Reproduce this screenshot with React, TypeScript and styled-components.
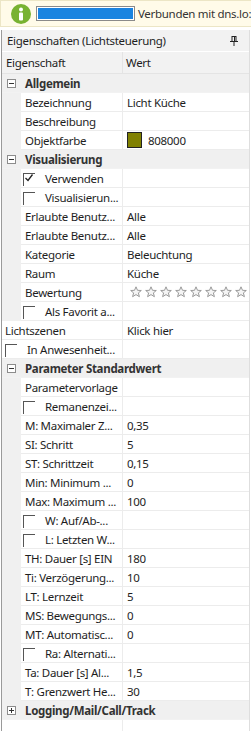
import React from "react";
import styled, { createGlobalStyle } from "styled-components";

const GlobalStyle = createGlobalStyle`
  html, body {
    margin: 0;
    padding: 0;
    background: #ffffff;
  }
  body {
    font-family: "Noto Sans", "Open Sans", sans-serif;
    font-size: 11.5px;
    letter-spacing: -0.3px;
    color: #1e1e1e;
  }
`;

type Row =
  | { kind: "cat"; label: string; open: boolean }
  | {
      kind: "prop";
      label: string;
      value?: string;
      flat?: boolean;
      check?: "on" | "off";
      color?: string;
      stars?: number;
    };

const rows: Row[] = [
  { kind: "cat", label: "Allgemein", open: true },
  { kind: "prop", label: "Bezeichnung", value: "Licht Küche" },
  { kind: "prop", label: "Beschreibung" },
  { kind: "prop", label: "Objektfarbe", value: "808000", color: "#808000" },
  { kind: "cat", label: "Visualisierung", open: true },
  { kind: "prop", label: "Verwenden", check: "on" },
  { kind: "prop", label: "Visualisierun...", check: "off" },
  { kind: "prop", label: "Erlaubte Benutz...", value: "Alle" },
  { kind: "prop", label: "Erlaubte Benutz...", value: "Alle" },
  { kind: "prop", label: "Kategorie", value: "Beleuchtung" },
  { kind: "prop", label: "Raum", value: "Küche" },
  { kind: "prop", label: "Bewertung", stars: 9 },
  { kind: "prop", label: "Als Favorit a...", check: "off" },
  { kind: "prop", label: "Lichtszenen", value: "Klick hier", flat: true },
  { kind: "prop", label: "In Anwesenheit...", check: "off", flat: true },
  { kind: "cat", label: "Parameter Standardwert", open: true },
  { kind: "prop", label: "Parametervorlage" },
  { kind: "prop", label: "Remanenzei...", check: "off" },
  { kind: "prop", label: "M: Maximaler Z...", value: "0,35" },
  { kind: "prop", label: "SI: Schritt", value: "5" },
  { kind: "prop", label: "ST: Schrittzeit", value: "0,15" },
  { kind: "prop", label: "Min: Minimum ...", value: "0" },
  { kind: "prop", label: "Max: Maximum ...", value: "100" },
  { kind: "prop", label: "W: Auf/Ab-...", check: "off" },
  { kind: "prop", label: "L: Letzten W...", check: "off" },
  { kind: "prop", label: "TH: Dauer [s] EIN", value: "180" },
  { kind: "prop", label: "Ti: Verzögerung...", value: "10" },
  { kind: "prop", label: "LT: Lernzeit", value: "5" },
  { kind: "prop", label: "MS: Bewegungs...", value: "0" },
  { kind: "prop", label: "MT: Automatisc...", value: "0" },
  { kind: "prop", label: "Ra: Alternati...", check: "off" },
  { kind: "prop", label: "Ta: Dauer [s] Al...", value: "1,5" },
  { kind: "prop", label: "T: Grenzwert He...", value: "30" },
  { kind: "cat", label: "Logging/Mail/Call/Track", open: false },
];

const Page = styled.div`
  width: 251px;
  height: 731px;
  overflow: hidden;
  display: flex;
  flex-direction: column;
`;

const Banner = styled.div`
  height: 27px;
  flex-shrink: 0;
  display: flex;
  align-items: center;
  gap: 5px;
  padding-left: 10px;
  background: #fffbe9;
  border: 1px solid #ece6c6;
  border-right: none;
  box-sizing: border-box;
  white-space: nowrap;
  overflow: hidden;
  color: #333;
`;

const BannerText = styled.span`
  flex-shrink: 0;
  margin-left: -2px;
`;

const InfoDot = styled.div`
  width: 20px;
  height: 20px;
  border-radius: 50%;
  background: #78b232;
  flex-shrink: 0;
  display: flex;
  align-items: center;
  justify-content: center;
`;

const Progress = styled.div`
  width: 95px;
  height: 11px;
  border: 1px solid #8a8a8a;
  padding: 1px;
  background: #fff;
  flex-shrink: 0;
`;

const ProgressFill = styled.div`
  height: 100%;
  background: #1a84e0;
`;

const Panel = styled.div`
  margin-top: 3px;
  flex: 1;
  display: flex;
  flex-direction: column;
  border-left: 1px solid #9a9a9a;
  margin-left: 1px;
  width: 247px;
  border-right: 1px solid #dedede;
`;

const TitleBar = styled.div`
  height: 21px;
  display: flex;
  align-items: center;
  justify-content: space-between;
  padding: 0 11px 0 5px;
  background: #f2f2f2;
  border-bottom: 1px solid #ffffff;
`;

const HeaderRow = styled.div`
  height: 21px;
  display: grid;
  grid-template-columns: 121px 1fr;
  background: #f2f2f2;
  border-bottom: 1px solid #e4e4e4;
`;

const HeaderCell = styled.div<{ $divider?: boolean }>`
  display: flex;
  align-items: center;
  padding-left: ${(p) => (p.$divider ? "4px" : "3px")};
  border-right: ${(p) => (p.$divider ? "1px solid #e4e4e4" : "none")};
`;

const CatRow = styled.div`
  height: 18px;
  border-bottom: 1px solid #f2f2f2;
  background: #f0f0f0;
  display: flex;
  align-items: center;
  font-weight: bold;
  color: #333;
`;

const ToggleBox = styled.span`
  width: 7px;
  height: 7px;
  border: 1px solid #8c8c8c;
  margin: 0 9px 0 5px;
  position: relative;
  background: #fff;
  &::before {
    content: "";
    position: absolute;
    left: 1px;
    right: 1px;
    top: 3px;
    height: 1px;
    background: #333;
  }
`;

const PlusBox = styled(ToggleBox)`
  &::after {
    content: "";
    position: absolute;
    top: 1px;
    bottom: 1px;
    left: 3px;
    width: 1px;
    background: #333;
  }
`;

const PropRow = styled.div<{ $flat?: boolean }>`
  height: 19px;
  display: grid;
  grid-template-columns: ${(p) => (p.$flat ? "121px 1fr" : "19px 102px 1fr")};
  background: #f0f0f0;
`;

const Cell = styled.div`
  display: flex;
  align-items: center;
  background: #fff;
  border-bottom: 1px solid #ececec;
  white-space: nowrap;
  overflow: hidden;
`;

const NameCell = styled(Cell)<{ $flat?: boolean }>`
  padding-left: ${(p) => (p.$flat ? "3px" : "4px")};
  border-right: 1px solid #ececec;
`;

const ValueCell = styled(Cell)`
  padding-left: 4px;
`;

const CheckMark = styled.span<{ $flat?: boolean }>`
  width: 11px;
  height: 12px;
  border-top: 1px solid #555;
  border-left: 1px solid #555;
  margin: 2px 10px 0 ${(p) => (p.$flat ? "0" : "-2px")};
  flex-shrink: 0;
  position: relative;
`;

const Swatch = styled.span<{ $c: string }>`
  width: 13px;
  height: 14px;
  border: 1px solid #222;
  background: ${(p) => p.$c};
  margin-right: 6px;
`;

const Stars = styled.div`
  display: flex;
  gap: 3px;
  margin-left: 3px;
`;

const Filler = styled.div`
  flex: 1;
  display: grid;
  grid-template-columns: 121px 1fr;
`;

const FillerCell = styled.div`
  border-right: 1px solid #ececec;
`;

const Star = () => (
  <svg width="12" height="12" viewBox="0 0 12 12">
    <path
      d="M6 0.8 L7.5 4.3 L11.3 4.5 L8.4 6.9 L9.4 10.7 L6 8.6 L2.6 10.7 L3.6 6.9 L0.7 4.5 L4.5 4.3 Z"
      fill="#f4f4f4"
      stroke="#9a9a9a"
      strokeWidth="1"
    />
  </svg>
);

const Pin = () => (
  <svg width="8" height="10" viewBox="0 0 8 10">
    <rect x="2" y="0.5" width="4" height="5" fill="none" stroke="#222" />
    <rect x="0" y="5" width="8" height="1" fill="#222" />
    <rect x="3.5" y="6" width="1" height="4" fill="#222" />
    <rect x="4" y="1" width="1" height="4" fill="#222" />
  </svg>
);

const Check = () => (
  <svg width="10" height="10" viewBox="0 0 10 10" style={{ position: "absolute", left: 0, top: -1 }}>
    <path d="M1.5 5 L4 7.5 L8.5 1.5" fill="none" stroke="#222" strokeWidth="1.3" />
  </svg>
);

const renderRow = (row: Row, i: number) => {
  if (row.kind === "cat") {
    return (
      <CatRow key={i}>
        {row.open ? <ToggleBox /> : <PlusBox />}
        {row.label}
      </CatRow>
    );
  }
  return (
    <PropRow key={i} $flat={row.flat}>
      {!row.flat && <div />}
      <NameCell $flat={row.flat}>
        {row.check && <CheckMark $flat={row.flat}>{row.check === "on" && <Check />}</CheckMark>}
        {row.label}
      </NameCell>
      <ValueCell>
        {row.color && <Swatch $c={row.color} />}
        {row.stars && (
          <Stars>
            {Array.from({ length: row.stars }).map((_, k) => (
              <Star key={k} />
            ))}
          </Stars>
        )}
        {row.value}
      </ValueCell>
    </PropRow>
  );
};

export default function App() {
  return (
    <Page>
      <GlobalStyle />
      <Banner>
        <InfoDot>
          <svg width="8" height="14" viewBox="0 0 8 14">
            <circle cx="4" cy="2.5" r="2" fill="#fff" />
            <rect x="2" y="5.5" width="4" height="8" rx="1" fill="#fff" />
          </svg>
        </InfoDot>
        <Progress>
          <ProgressFill />
        </Progress>
        <BannerText>Verbunden mit dns.lo:</BannerText>
      </Banner>
      <Panel>
        <TitleBar>
          Eigenschaften (Lichtsteuerung)
          <Pin />
        </TitleBar>
        <HeaderRow>
          <HeaderCell $divider>Eigenschaft</HeaderCell>
          <HeaderCell>Wert</HeaderCell>
        </HeaderRow>
        {rows.map(renderRow)}
        <Filler>
          <FillerCell />
          <div />
        </Filler>
      </Panel>
    </Page>
  );
}
